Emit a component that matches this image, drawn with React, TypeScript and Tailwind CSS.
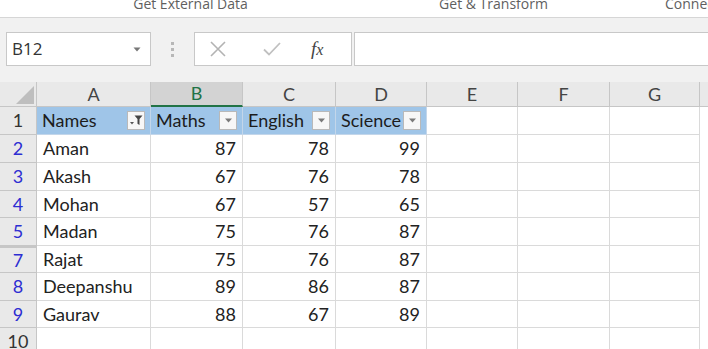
import React from "react"

const cols = [
  { key: "A", w: "w-[114px]" },
  { key: "B", w: "w-[92px]" },
  { key: "C", w: "w-[93px]" },
  { key: "D", w: "w-[91px]" },
  { key: "E", w: "w-[91px]" },
  { key: "F", w: "w-[92px]" },
  { key: "G", w: "w-[90px]" },
]

const rows = [
  { n: "2", h: "h-[28px]", name: "Aman", vals: ["87", "78", "99"] },
  { n: "3", h: "h-[28px]", name: "Akash", vals: ["67", "76", "78"] },
  { n: "4", h: "h-[27px]", name: "Mohan", vals: ["67", "57", "65"] },
  { n: "5", h: "h-[28px]", name: "Madan", vals: ["75", "76", "87"] },
  { n: "7", h: "h-[27px]", name: "Rajat", vals: ["75", "76", "87"] },
  { n: "8", h: "h-[28px]", name: "Deepanshu", vals: ["89", "86", "87"] },
  { n: "9", h: "h-[27px]", name: "Gaurav", vals: ["88", "67", "89"] },
]

function DropButton({ filtered }: { filtered?: boolean }) {
  return (
    <span className="flex h-[19px] w-[18px] shrink-0 items-center justify-center border border-[#b9b9b9] bg-[#f7f7f7]">
      {filtered ? (
        <svg width="14" height="13" viewBox="0 0 14 13">
          <path d="M1 8h4l-2 2.5z" fill="#555" />
          <path d="M5.5 1.5h8l-3 3.5v6l-2-1.2v-4.8z" fill="#444" />
        </svg>
      ) : (
        <svg width="9" height="5" viewBox="0 0 9 5">
          <path d="M1 0.5h7l-3.5 4z" fill="#7a7a7a" />
        </svg>
      )}
    </span>
  )
}

function RowHead({ n, h, blue = true }: { n: string; h: string; blue?: boolean }) {
  return (
    <div
      className={`${h} flex w-[37px] shrink-0 items-center justify-center border-b border-r border-[#c6c6c6] bg-[#e9e9e9] text-[18px] ${
        blue ? "text-[#2d2dd2]" : "text-[#333]"
      } ${n === "7" ? "border-t-2 border-t-[#c6c6c6]" : ""}`}
    >
      {n}
    </div>
  )
}

export default function App() {
  return (
    <div className="h-[349px] w-[708px] overflow-hidden bg-white font-['Lato',sans-serif] text-[#222]">
      {/* ribbon group labels, cut off at top like the screenshot */}
      <div className="flex h-[18px] overflow-hidden border-b border-[#d6d6d6] bg-white font-['Open_Sans',sans-serif] text-[14px] text-[#5f5f5f]">
        <div className="flex w-[381px] shrink-0 justify-center leading-none">
          <span className="-mt-[3px]">Get External Data</span>
        </div>
        <div className="mb-[5px] w-px bg-[#d8d8d8]" />
        <div className="flex w-[225px] shrink-0 justify-center leading-none">
          <span className="-mt-[3px]">Get &amp; Transform</span>
        </div>
        <div className="mb-[5px] w-px bg-[#d8d8d8]" />
        <div className="flex flex-1 pl-[59px] leading-none">
          <span className="-mt-[3px] whitespace-nowrap">Connections</span>
        </div>
      </div>

      {/* formula bar */}
      <div className="flex h-[64px] items-start bg-[#f1f1f1] pt-[14px] pl-[6px] font-['Open_Sans',sans-serif]">
        <div className="flex h-[34px] w-[145px] shrink-0 items-center justify-between border border-[#c8c8c8] bg-white pl-[5px] pr-[9px]">
          <span className="text-[17px] text-[#333]">B12</span>
          <svg width="8" height="5" viewBox="0 0 8 5">
            <path d="M0.5 0.5h7l-3.5 4z" fill="#777" />
          </svg>
        </div>
        <div className="flex h-[34px] w-[43px] flex-col items-center justify-center gap-[3px]">
          <span className="h-[3px] w-[3px] bg-[#b7b7b7]" />
          <span className="h-[3px] w-[3px] bg-[#b7b7b7]" />
          <span className="h-[3px] w-[3px] bg-[#b7b7b7]" />
        </div>
        <div className="flex h-[34px] w-[158px] shrink-0 items-center border border-[#c8c8c8] bg-white">
          <svg className="ml-[14px]" width="18" height="18" viewBox="0 0 18 18">
            <path d="M2 2l14 14M16 2L2 16" stroke="#b3b3b3" strokeWidth="1.6" fill="none" />
          </svg>
          <svg className="ml-[36px]" width="18" height="16" viewBox="0 0 18 16">
            <path d="M1 8.5l5 5L17 2" stroke="#c0c0c0" strokeWidth="1.8" fill="none" />
          </svg>
          <span className="ml-[30px] font-['Liberation_Serif',serif] text-[19px] italic text-[#444]">
            f<span className="text-[16px]">x</span>
          </span>
        </div>
        <div className="ml-[2px] h-[34px] flex-1 border border-r-0 border-[#c8c8c8] bg-white" />
      </div>

      {/* column headers */}
      <div className="flex h-[25px] bg-[#e9e9e9]">
        <div className="flex w-[37px] shrink-0 items-end justify-end border-b border-r border-[#c6c6c6] pb-[2px] pr-[2px]">
          <svg width="18" height="18" viewBox="0 0 18 18">
            <path d="M18 0v18H0z" fill="#bebebe" />
          </svg>
        </div>
        {cols.map((c) => (
          <div
            key={c.key}
            className={`${c.w} flex shrink-0 items-center justify-center border-r text-[18px] ${
              c.key === "B"
                ? "border-b-2 border-r-[#c6c6c6] border-b-[#217346] bg-[#d3d3d3] text-[#217346]"
                : "border-b border-[#c6c6c6] text-[#444]"
            }`}
          >
            {c.key}
          </div>
        ))}
        <div className="flex-1 border-b border-[#c6c6c6]" />
      </div>

      {/* table header row */}
      <div className="flex h-[28px]">
        <RowHead n="1" h="h-[28px]" blue={false} />
        {["Names", "Maths", "English", "Science"].map((t, i) => (
          <div
            key={t}
            className={`${cols[i].w} flex shrink-0 items-center justify-between border-b border-r border-[#c3d6ea] bg-[#9fc5e8] pl-[5px] pr-[5px] text-[18px] text-[#1c1c1c]`}
          >
            <span>{t}</span>
            <DropButton filtered={i === 0} />
          </div>
        ))}
        {cols.slice(4).map((c) => (
          <div key={c.key} className={`${c.w} shrink-0 border-b border-r border-[#dadada]`} />
        ))}
      </div>

      {/* data rows */}
      {rows.map((r) => (
        <div key={r.n} className={`flex ${r.h}`}>
          <RowHead n={r.n} h={r.h} />
          <div className={`${cols[0].w} flex shrink-0 items-center border-b border-r border-[#dadada] pl-[6px] text-[18px]`}>
            {r.name}
          </div>
          {r.vals.map((v, i) => (
            <div
              key={i}
              className={`${cols[i + 1].w} flex shrink-0 items-center justify-end border-b border-r border-[#dadada] pr-[6px] text-[18px]`}
            >
              {v}
            </div>
          ))}
          {cols.slice(4).map((c) => (
            <div key={c.key} className={`${c.w} shrink-0 border-b border-r border-[#dadada]`} />
          ))}
        </div>
      ))}

      <div className="flex h-[28px]">
        <RowHead n="10" h="h-[28px]" blue={false} />
        {cols.map((c) => (
          <div key={c.key} className={`${c.w} shrink-0 border-b border-r border-[#dadada]`} />
        ))}
      </div>
    </div>
  )
}
